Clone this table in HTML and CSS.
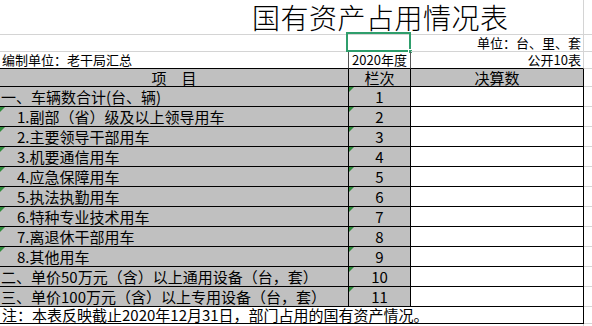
FILE: index.html
```html
<!DOCTYPE html>
<html lang="zh-CN">
<head>
<meta charset="utf-8">
<title>国有资产占用情况表</title>
<link rel="stylesheet" href="styles.css">
</head>
<body>
<div class="sheet">
  <div class="row r-title">
    <div class="c-all title">国有资产占用情况表</div>
    <div class="c-ext"></div>
  </div>
  <div class="row r-top">
    <div class="c1 plain"></div>
    <div class="c2 plain sel-host"><span class="sel"></span><span class="handle"></span></div>
    <div class="c3 plain right">单位：台、里、套</div>
    <div class="c-ext"></div>
  </div>
  <div class="row r-top r-unit">
    <div class="c1 plain left">编制单位：老干局汇总</div>
    <div class="c2 plain framed center">2020年度</div>
    <div class="c3 plain right">公开10表</div>
    <div class="c-ext"></div>
  </div>
  <div class="row r-head">
    <div class="c1 gray center">项　目</div>
    <div class="c2 gray center">栏次</div>
    <div class="c3 gray center">决算数</div>
    <div class="c-ext"></div>
  </div>
  <div class="row r-data">
    <div class="c1 gray item">一、车辆数合计(台、辆)</div>
    <div class="c2 gray center num"><i class="tri"></i>1</div>
    <div class="c3 white"></div>
    <div class="c-ext"></div>
  </div>
  <div class="row r-data">
    <div class="c1 gray item sub"><i class="tri"></i>1.副部（省）级及以上领导用车</div>
    <div class="c2 gray center num"><i class="tri"></i>2</div>
    <div class="c3 white"></div>
    <div class="c-ext"></div>
  </div>
  <div class="row r-data">
    <div class="c1 gray item sub"><i class="tri"></i>2.主要领导干部用车</div>
    <div class="c2 gray center num"><i class="tri"></i>3</div>
    <div class="c3 white"></div>
    <div class="c-ext"></div>
  </div>
  <div class="row r-data">
    <div class="c1 gray item sub"><i class="tri"></i>3.机要通信用车</div>
    <div class="c2 gray center num"><i class="tri"></i>4</div>
    <div class="c3 white"></div>
    <div class="c-ext"></div>
  </div>
  <div class="row r-data">
    <div class="c1 gray item sub"><i class="tri"></i>4.应急保障用车</div>
    <div class="c2 gray center num"><i class="tri"></i>5</div>
    <div class="c3 white"></div>
    <div class="c-ext"></div>
  </div>
  <div class="row r-data">
    <div class="c1 gray item sub"><i class="tri"></i>5.执法执勤用车</div>
    <div class="c2 gray center num"><i class="tri"></i>6</div>
    <div class="c3 white"></div>
    <div class="c-ext"></div>
  </div>
  <div class="row r-data">
    <div class="c1 gray item sub"><i class="tri"></i>6.特种专业技术用车</div>
    <div class="c2 gray center num"><i class="tri"></i>7</div>
    <div class="c3 white"></div>
    <div class="c-ext"></div>
  </div>
  <div class="row r-data">
    <div class="c1 gray item sub"><i class="tri"></i>7.离退休干部用车</div>
    <div class="c2 gray center num"><i class="tri"></i>8</div>
    <div class="c3 white"></div>
    <div class="c-ext"></div>
  </div>
  <div class="row r-data">
    <div class="c1 gray item sub"><i class="tri"></i>8.其他用车</div>
    <div class="c2 gray center num"><i class="tri"></i>9</div>
    <div class="c3 white"></div>
    <div class="c-ext"></div>
  </div>
  <div class="row r-data">
    <div class="c1 gray item">二、单价50万元（含）以上通用设备（台，套）</div>
    <div class="c2 gray center num"><i class="tri"></i>10</div>
    <div class="c3 white"></div>
    <div class="c-ext"></div>
  </div>
  <div class="row r-data">
    <div class="c1 gray item">三、单价100万元（含）以上专用设备（台，套）</div>
    <div class="c2 gray center num"><i class="tri"></i>11</div>
    <div class="c3 white"></div>
    <div class="c-ext"></div>
  </div>
  <div class="row r-note">
    <div class="c-all note">注：本表反映截止2020年12月31日，部门占用的国有资产情况。</div>
    <div class="c-ext"></div>
  </div>
  <div class="row r-fill">
    <div class="c-all fill"></div>
    <div class="c-ext"></div>
  </div>
</div>
</body>
</html>
```

FILE: styles.css
```css
* { box-sizing: border-box; }

html, body {
  margin: 0;
  padding: 0;
  background: #ffffff;
}

body {
  font-family: "Noto Sans CJK SC", "Noto Sans", sans-serif;
  color: #000000;
  width: 592px;
  height: 326px;
  overflow: hidden;
}

.sheet {
  display: flex;
  flex-direction: column;
  width: 592px;
}

.row {
  display: flex;
  flex: none;
}

.c1, .c2, .c3, .c-all, .c-ext {
  flex: none;
  white-space: nowrap;
  position: relative;
}

.c1 { width: 349px; }
.c2 { width: 62px; }
.c3 { width: 173px; }
.c-all { width: 584px; }
.c-ext {
  width: 8px;
  border-bottom: 1px solid #d4d4d4;
}

/* title row */
.r-title { height: 35px; }
.title {
  border-bottom: 1px solid #d4d4d4;
  border-right: 1px solid #d4d4d4;
  font-size: 28px;
  font-weight: 300;
  line-height: 34px;
  padding-left: 252px;
  letter-spacing: 0.5px;
}

/* two small rows above the table */
.r-top { height: 17px; }
.plain {
  font-size: 13px;
  line-height: 16px;
  border-bottom: 1px solid #d4d4d4;
}
.r-top .c3 { border-right: 1px solid #d4d4d4; }
.r-unit .plain { border-bottom-color: #000000; }
.r-unit .c1 { border-right: 1px solid #555555; }
.r-unit .framed { border-right: 1px solid #555555; }

.left { padding-left: 2px; }
.right { text-align: right; padding-right: 2px; }
.center { text-align: center; }

/* selection box */
.sel {
  position: absolute;
  left: -3px;
  top: -3px;
  width: 65px;
  height: 20px;
  border: 2px solid #2f9e6c;
}
.handle {
  position: absolute;
  left: 59px;
  top: 14px;
  width: 5px;
  height: 5px;
  background: #2f9e6c;
  border: 1px solid #ffffff;
}

/* header row */
.r-head { height: 18px; }
.gray {
  background: #c0c0c0;
  border-right: 1px solid #000000;
  border-bottom: 1px solid #000000;
}
.white {
  background: #ffffff;
  border-right: 1px solid #000000;
  border-bottom: 1px solid #000000;
}
.r-head .gray {
  font-size: 15px;
  line-height: 17px;
}

/* data rows */
.r-data { height: 20px; }
.r-data .c1, .r-data .c2 {
  font-size: 15px;
  line-height: 18px;
  padding-top: 1px;
}
.item { padding-left: 1px; }
.item.sub { padding-left: 17px; }

.tri {
  position: absolute;
  left: 0;
  top: 0;
  width: 0;
  height: 0;
  border-top: 5px solid #2e8b3a;
  border-right: 5px solid transparent;
}

/* note row */
.r-note { height: 17px; }
.note {
  font-size: 15px;
  line-height: 16px;
  padding-left: 2px;
  border-right: 1px solid #000000;
  border-bottom: 1px solid #000000;
}

.r-fill { height: 3px; }
.fill { border-right: 1px solid #d4d4d4; }
.r-fill .c-ext { border-bottom: none; }
```
